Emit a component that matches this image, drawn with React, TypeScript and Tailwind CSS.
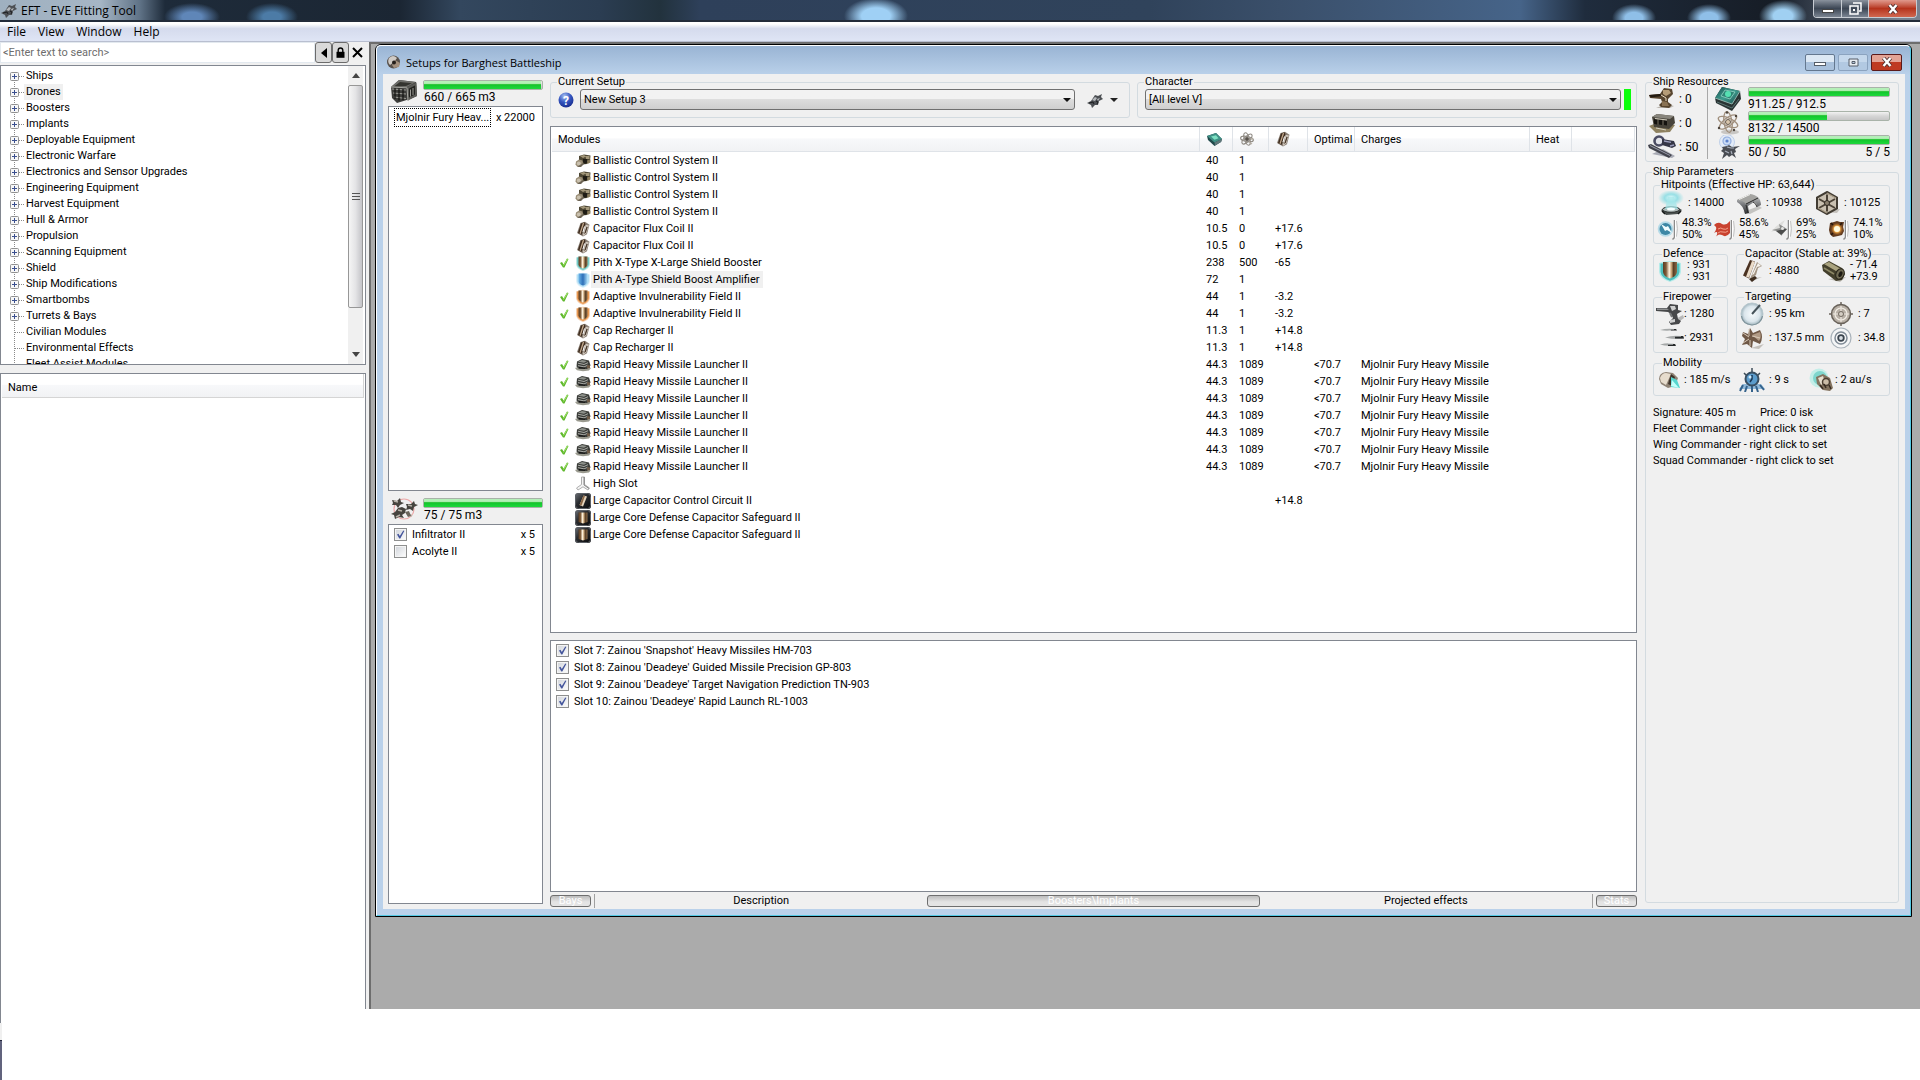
import type { ReactNode } from "react";

type Module = {
  name: string;
  icon: ReactNode;
  active?: boolean;
  selected?: boolean;
  cpu?: string;
  grid?: string;
  cap?: string;
  optimal?: string;
  charges?: string;
};

/* ---------- icons ---------- */

function Icon16({ children }: { children: ReactNode }) {
  return (
    <svg viewBox="0 0 16 16" className="h-4 w-4 shrink-0" aria-hidden="true">
      {children}
    </svg>
  );
}

function Icon28({ children }: { children: ReactNode }) {
  return (
    <svg viewBox="0 0 28 24" className="h-6 w-7 shrink-0" aria-hidden="true">
      {children}
    </svg>
  );
}

function Gradients() {
  return (
    <svg className="absolute h-0 w-0" aria-hidden="true">
      <defs>
        <linearGradient id="steel" x1="0" x2="0" y1="0" y2="1">
          <stop offset="0" stopColor="#d9dadb" />
          <stop offset=".5" stopColor="#7b7d80" />
          <stop offset="1" stopColor="#2d2e30" />
        </linearGradient>
        <linearGradient id="plate" x1="0" x2="1">
          <stop offset="0" stopColor="#5a3c22" />
          <stop offset=".22" stopColor="#7d5a38" />
          <stop offset=".45" stopColor="#fff3de" />
          <stop offset=".6" stopColor="#c9a679" />
          <stop offset=".75" stopColor="#5a4027" />
          <stop offset="1" stopColor="#8a6a48" />
        </linearGradient>
        <linearGradient id="blueplate" x1="0" x2="1">
          <stop offset="0" stopColor="#6bb6ea" />
          <stop offset=".5" stopColor="#2d6fb8" />
          <stop offset="1" stopColor="#a8dcf7" />
        </linearGradient>
        <linearGradient id="teal" x1="0" x2="1" y1="0" y2="1">
          <stop offset="0" stopColor="#1c4f50" />
          <stop offset=".5" stopColor="#3d9c8e" />
          <stop offset="1" stopColor="#1d4b4d" />
        </linearGradient>
        <radialGradient id="help" cx=".4" cy=".25" r=".8">
          <stop offset="0" stopColor="#a9c2f2" />
          <stop offset=".5" stopColor="#3556c0" />
          <stop offset="1" stopColor="#16298a" />
        </radialGradient>
        <radialGradient id="cyanGlow">
          <stop offset="0" stopColor="#e9ffff" />
          <stop offset=".5" stopColor="#83dbe2" stopOpacity=".8" />
          <stop offset="1" stopColor="#83dbe2" stopOpacity="0" />
        </radialGradient>
        <radialGradient id="fireGlow">
          <stop offset="0" stopColor="#fffbd8" />
          <stop offset=".45" stopColor="#f7b04c" />
          <stop offset="1" stopColor="#7a3a10" stopOpacity="0" />
        </radialGradient>
        <radialGradient id="dial">
          <stop offset="0" stopColor="#f7fbfd" />
          <stop offset=".7" stopColor="#dbe6ec" />
          <stop offset="1" stopColor="#9fb4bd" />
        </radialGradient>
        <linearGradient id="rig" x1="0" x2="1" y1="0" y2="1">
          <stop offset="0" stopColor="#6f747a" />
          <stop offset=".4" stopColor="#2b2d31" />
          <stop offset="1" stopColor="#08090a" />
        </linearGradient>
      </defs>
    </svg>
  );
}

const ballistic = (
  <Icon16>
    <path d="M4 3l5-1.500 6.500 1-.5 5.500-3 3-5 .5-3-3z" fill="#4d4633" />
    <path d="M5 3l4-1 2 1.500-3 1.500zM10.500 3l4 0 0 3-3.500 0z" fill="#a3977a" />
    <path d="M8 6l4 0 1 3-3 2-2-2z" fill="#1f1c15" />
    <path d="M12 7.500l3.500-1 0 3-3 1.500z" fill="#8a7d5d" />
    <path d="M1 8.500l3-2 3.500 1 .5 3-2.500 3.500-3.500-.5-1.500-2z" fill="#9b8f78" />
    <circle cx="3.800" cy="10.500" r="2" fill="#c9c0ae" />
    <path d="M2 14l4 0 3-3-1-1z" fill="#6b6353" />
  </Icon16>
);

const capacitor = (
  <Icon16>
    <path d="M5.500 2L10 .8l4.500 3-2.500 9.500L8 15.500 2 12z" fill="#8b8076" />
    <path d="M6 2.500l3.500-1.300 1 1.800L6.500 14 3 12z" fill="#3e2c1e" />
    <path d="M7.700 2.200l1.600-.4L5.600 13 4.500 12.500z" fill="#c1a88c" />
    <path d="M10.800 4l3 .5-2.600 8-3.400 2.500z" fill="#ddd5ca" />
    <path d="M11.500 5.500l1.300.4-2 6-1.800 1z" fill="#49392c" />
    <path d="M9.500 5.500L8 11" stroke="#fff" strokeWidth="1" />
  </Icon16>
);

function ShieldIcon({ glow, fill }: { glow: string; fill: string }) {
  return (
    <Icon16>
      <path d="M1 2.500Q8-1 15 2.500V9q-.5 5-7 7Q1.500 14 1 9z" fill={glow} opacity=".45" />
      <path d="M2 2.500h12V9q-.5 4-6 6-5.500-2-6-6z" fill={glow} />
      <path d="M3.500 1.500h9V9.500Q12 12.500 8 13.500 4 12.500 3.500 9.500z" fill={fill} />
    </Icon16>
  );
}

const launcher = (
  <Icon16>
    <path d="M0 11l3-1 9 0 4 1-2 2.500-6 .8-6-1z" fill="#9a9a8f" />
    <path d="M2 4.500L7 2l7 1.500 1.500 5L12 12l-8 0-2.500-2.500z" fill="#3b3d39" />
    <path d="M3 4.800l4-1.800 5 1-3 1.700z" fill="#8e918b" />
    <path d="M3 6.200l6 1.300 4-1.800M3 8.600l6 1.300 4-1.800" stroke="#c5c7c1" strokeWidth=".8" fill="none" />
    <path d="M12 8l3 .5 0 2.500-3 .5z" fill="#6f5b47" />
    <path d="M4 10.500l6 .8" stroke="#111" />
  </Icon16>
);

const highSlot = (
  <Icon16>
    <path d="M6.500 1h3v7.500l5 3.500-1.500 2L8 10.800 3 14l-1.500-2 5-3.500z" fill="#f4f4f4" stroke="#a5a5a5" strokeWidth=".9" />
    <path d="M9 1v8l5 3.500" fill="none" stroke="#6c6c6c" strokeWidth=".8" />
  </Icon16>
);

const rigCircuit = (
  <Icon16>
    <rect width="16" height="16" rx="3" fill="url(#rig)" />
    <rect x=".5" y=".5" width="15" height="15" rx="3" fill="none" stroke="#5d6167" />
    <path d="M8.500 2.500l3.500 1L8 13.500l-3.500-1.500z" fill="#e6d5bd" />
    <path d="M8.500 2.500l1.500.5L6.500 12.500 4.500 12z" fill="#8a6645" />
  </Icon16>
);

const rigSafeguard = (
  <Icon16>
    <rect width="16" height="16" rx="3" fill="url(#rig)" />
    <rect x=".5" y=".5" width="15" height="15" rx="3" fill="none" stroke="#5d6167" />
    <path d="M3.500 2.500h9v9.500L8 13.500 3.500 12z" fill="url(#plate)" />
  </Icon16>
);

const cpuSmall = (
  <Icon16>
    <path d="M1 5l9-3 6 6-1 3-6.500 4L2 9z" fill="#20494b" />
    <path d="M1 5l9-3 6 6-7.500 3.500z" fill="#3f9186" />
    <path d="M5 5.500l5-1.300 2.500 3-4 1.500z" fill="#7de0c2" />
    <path d="M8.500 11.500L16 8l-.7 2.800L9 14.500z" fill="#60777a" />
  </Icon16>
);

const gridSmall = (
  <Icon16>
    <g fill="none" stroke="#8f8a83" strokeWidth="1.100">
      <ellipse cx="8" cy="8" rx="2.600" ry="6.500" transform="rotate(-20 8 8)" />
      <ellipse cx="8" cy="8" rx="2.600" ry="6.500" transform="rotate(45 8 8)" />
      <ellipse cx="8" cy="8" rx="2.600" ry="6.500" transform="rotate(100 8 8)" />
    </g>
    <circle cx="8" cy="8" r="2" fill="#57514a" />
    <path d="M10 11l3 2M12 8l2 0" stroke="#b9b2a8" strokeWidth="1.500" />
  </Icon16>
);

const shipSmall = (
  <Icon16>
    <path d="M0 11l4-2 4-6 3 1 4-2-1 3 2 2-4 2-1 4-3 0-3 3-1-3z" fill="#4d5054" />
    <path d="M5 8l3-3 2 1-2 3zM10 7l3-1-2 3z" fill="#b5b8bc" />
    <path d="M2 11l4-1 1 2M9 9l2 1-1 2" stroke="#1b1d20" fill="none" />
  </Icon16>
);

const cargoIcon = (
  <Icon28>
    <path d="M1 8L9 1l17 2 1 14-7 3L7 24 2 19z" fill="#3d3d3b" />
    <path d="M1 8L9 1l17 2-9 5z" fill="#6f6f6b" />
    <path d="M4 7.500L10 3l12 1.200-6 2.800z" fill="#34342f" />
    <path d="M17 8l9.500-4.500L27 17l-9 4.500z" fill="#5a5a56" />
    <path d="M19 9.500l6-3v9l-6 3z" fill="#22221f" />
    <path d="M20.500 10.500v7M23 9v7M2 10l14 1M3 14l13 1M4 18l12 1.500" stroke="#9b9b95" strokeWidth="1" />
    <path d="M5 9v11M9 9.500v12M13 10v11" stroke="#121210" strokeWidth="1.200" />
    <path d="M1 8l16 .8L18 22" stroke="#a6a6a0" fill="none" />
  </Icon28>
);

const dronesIcon = (
  <Icon28>
    <circle cx="14" cy="12" r="10" fill="none" stroke="#eba9a9" strokeWidth="1.200" />
    <g fill="#46443f">
      <path d="M2 3l5 1 3-3 1 4 3 1-4 2-2 3-2-3-4 0 1-2z" />
      <path d="M16 7l5 0 3-3 1 3 3 1-4 2-1 4-3-2-4 1 1-3z" />
      <path d="M8 11l4-1 4 2-1 4-3 2 2 3-5-1-4 2-1-4-3-1 4-2z" />
    </g>
    <path d="M4 4l4 1M18 8l4 1M8 13l4 1M6 20l4-2M17 16l5 3" stroke="#b7b2a8" strokeWidth="1.500" />
    <path d="M15 15l4-1 2 5-3 1z" fill="#6a655c" />
  </Icon28>
);

const turretIcon = (
  <Icon28>
    <path d="M8 21l14 0 4-2-8-2z" fill="#b9b4ad" />
    <path d="M1 8l11-1 4-6 8 1 1 5-5 5 0 3 4 3-3 3-8-1-2-2 3-3-1-3L2 11z" fill="#57452f" />
    <path d="M1 8l11-1 2 2-11 1.500z" fill="#231a10" />
    <path d="M15 3l6 0 2 3-5 3-3-2z" fill="#b59c77" />
    <path d="M14 14l5 1 2 4-7 0z" fill="#897254" />
    <path d="M13 8l5 3 0 3" stroke="#eadcc2" fill="none" />
  </Icon28>
);

const launcherIcon = (
  <Icon28>
    <path d="M1 15l10-4 16 3-5 7-14 1z" fill="#8e815f" />
    <path d="M4 6l5-3 17 2 1 7-6 6-15-2z" fill="#47433a" />
    <path d="M4 6l5-3 17 2-4 3z" fill="#88857c" />
    <path d="M6 8l3 .4v5l-3-.6zM11 8.600l3 .4v5l-3-.6zM16 9.200l3 .4v5l-3-.6z" fill="#15130f" />
    <path d="M7 7.500l12 1.500M8 17l10 2" stroke="#d4cfc0" strokeWidth="1" />
  </Icon28>
);

const calibrationIcon = (
  <Icon28>
    <path d="M4 19l20 4 3-2-12-7z" fill="#a8aab4" />
    <path d="M0 10l3-1 21 11-3 3L1 13z" fill="#42434c" />
    <path d="M2 10.500l20 10" stroke="#989aa9" strokeWidth="1" />
    <circle cx="11" cy="6" r="4.500" fill="#e2e3ea" stroke="#4b4c63" strokeWidth="2.600" />
    <path d="M14 4l12 2 2 5-4 2-10-3z" fill="#353646" />
    <path d="M16 6l7 1.300M22 11l4-1" stroke="#9b9dbb" strokeWidth="1.300" />
  </Icon28>
);

const cpuIcon = (
  <Icon28>
    <path d="M1 11L8 0l18 4 1 8-9 12L2 16z" fill="#2a3434" />
    <path d="M1 11L8 0l18 4-8 13z" fill="url(#teal)" />
    <path d="M7 9l4-6 10 2-5 7z" fill="#2f8475" stroke="#92d6c5" strokeWidth=".8" />
    <circle cx="14" cy="7" r="3" fill="#5cf0bd" opacity=".85" />
    <path d="M1 11l17 6 8-13" fill="none" stroke="#8fb2ab" />
    <path d="M3 15l15 6 7-9" stroke="#5a7573" fill="none" />
  </Icon28>
);

const gridIcon = (
  <Icon28>
    <ellipse cx="16" cy="21" rx="9" ry="2.500" fill="#c8c6c3" />
    <g fill="none" stroke="#a08f7d" strokeWidth="1.300">
      <ellipse cx="14" cy="11" rx="4" ry="10.500" transform="rotate(-8 14 11)" />
      <ellipse cx="14" cy="11" rx="4" ry="10.500" transform="rotate(52 14 11)" />
      <ellipse cx="14" cy="11" rx="4" ry="10.500" transform="rotate(-66 14 11)" />
    </g>
    <circle cx="14" cy="11" r="2.500" fill="#d8c6ad" stroke="#65584a" />
    <g fill="#4c443c">
      <circle cx="13" cy="1.500" r="1.200" />
      <circle cx="5" cy="17" r="1.200" />
      <circle cx="22" cy="5" r="1.200" />
      <circle cx="20" cy="19" r="1.200" />
    </g>
  </Icon28>
);

const bandwidthIcon = (
  <Icon28>
    <circle cx="13" cy="7" r="7.500" fill="#e3ebf7" stroke="#c0d1ea" />
    <circle cx="13" cy="6" r="4" fill="#cbdcf5" stroke="#8fabde" strokeWidth="1.200" />
    <circle cx="13" cy="6" r="1.600" fill="#5d82cc" />
    <path d="M8 12l5-1 2-1 3 2 8-1-5 3 1 3-2 1 2 5-4-3-3 2-2-2-5 4 2-6-3-2 2-2z" fill="#494c53" />
    <path d="M13 12l4 1 3 0M11 16l4 2M17 16l1 3" stroke="#a9afba" strokeWidth="1.200" fill="none" />
  </Icon28>
);

const shieldHpIcon = (
  <Icon28>
    <ellipse cx="14" cy="7" rx="13" ry="8" fill="url(#cyanGlow)" />
    <path d="M4 19l6-3h10l5 3-4 4-12 1z" fill="#4b5150" />
    <ellipse cx="14" cy="18.500" rx="8.500" ry="2.800" fill="#aeb9b8" stroke="#2b302f" />
    <path d="M8 18L11 6l6 0 4 12z" fill="#a7e7ea" opacity=".75" />
    <ellipse cx="14" cy="18" rx="4" ry="1.500" fill="#f4ffff" />
    <path d="M5 20l3 3M24 20l-3 3" stroke="#151817" strokeWidth="1.500" />
  </Icon28>
);

const armorIcon = (
  <Icon28>
    <path d="M8 21l7 2 12-6-3-2z" fill="#c3c3c1" />
    <path d="M2 9L15 3q8 1 10 6 1 3 1 5l-4 2q0-4-3-5l-6 4 1 7-4 1Q8 14 2 11z" fill="url(#steel)" />
    <path d="M2 9L15 3q5 .5 8 4L11 13Q8 9 2 9z" fill="#a5a5a2" />
    <path d="M11 13l12-6M18 11q3 1 4 5M11 14l2 8" stroke="#2a2a2a" fill="none" />
    <path d="M4 8.500l11-5" stroke="#f1f1ee" />
  </Icon28>
);

const hullIcon = (
  <Icon28>
    <path d="M8 21l16 1 3-4z" fill="#c6c3be" />
    <path d="M14 1l10 5.500v11L14 23 4 17.500v-11z" fill="#c9c0b1" stroke="#423c33" strokeWidth="2" />
    <path d="M14 3.500v17M6 8l16 9M22 8L6 17" stroke="#4b4237" strokeWidth="2" />
    <path d="M14 2l9 5M5 17l9 5" stroke="#a89b85" strokeWidth="1.200" />
    <circle cx="14" cy="12" r="2.500" fill="#8c8170" stroke="#2f2922" />
  </Icon28>
);

/* resistance plate drawn to the right of every damage icon */
function DamageIcon({ children }: { children: ReactNode }) {
  return (
    <svg viewBox="0 0 25 24" className="h-6 w-[25px] shrink-0" aria-hidden="true">
      {children}
      <path d="M17.500 3v17.500l-2 2" fill="none" stroke="#8b8b8b" strokeWidth="1.500" />
      <path d="M19.500 4q2 8 0 15l-2 2.500" fill="none" stroke="#c4c4c4" />
      <path d="M18.500 3v18" stroke="#fff" />
    </svg>
  );
}

const emIcon = (
  <DamageIcon>
    <circle cx="8.500" cy="12" r="7.800" fill="#b6dbe8" />
    <circle cx="8.500" cy="12" r="6" fill="#3d87a5" />
    <path d="M4 7l5 3 2-1 4 7-5-3-2 1z" fill="#f2fdff" />
  </DamageIcon>
);

const thermalIcon = (
  <DamageIcon>
    <path d="M0 8q4-4 8-1 4 2 8-3l0 12q-4 5-8 2-4-2-7 3 3-4 2-6-2 0-3 1 3-4 2-6-1-1-2-2z" fill="#c9422f" />
    <path d="M4 12q3-2 5 0 3 1 5-1M4 16q2-2 5-1 3 1 5-1" stroke="#f3a08b" strokeWidth="1" fill="none" />
  </DamageIcon>
);

const kineticIcon = (
  <DamageIcon>
    <path d="M0 15Q5 8 14 3L9 12z" fill="#dededc" />
    <path d="M1 13l8-2-1-4 8 5-6 7 0-4z" fill="#8e8f8e" />
    <path d="M5 14l8-2 3 0-6 6z" fill="#4c4d4c" />
    <circle cx="11.500" cy="11.500" r="1.500" fill="#e6e6e4" />
  </DamageIcon>
);

const explosiveIcon = (
  <DamageIcon>
    <path d="M2 6l4-1 3-1 3 1 4 0-1 5 1 4-2 4-4 1-5 1-3-3-1-4z" fill="#5f3a1f" />
    <circle cx="9" cy="12" r="7" fill="url(#fireGlow)" />
    <circle cx="9" cy="12" r="3" fill="#fffbe0" />
    <path d="M3 6l2 2M14 6l-2 2M3 18l2-2" stroke="#25160b" strokeWidth="1.500" />
  </DamageIcon>
);

const defenceIcon = (
  <Icon28>
    <path d="M3 4q11-4 22 0v9q-1 7-11 10Q4 20 3 13z" fill="#b5ebe9" />
    <path d="M4.500 4.500h19V13q-1 6-9.500 8.800Q5.500 19 4.500 13z" fill="#4dbfbd" />
    <path d="M7 3h14v10q-.5 4.500-7 6.500-6.500-2-7-6.500z" fill="url(#plate)" />
  </Icon28>
);

const capacitorIcon = (
  <Icon28>
    <path d="M12 23l12-5-6 1z" fill="#b9b7b4" />
    <path d="M12 1l5 1.500-6 17-6-3z" fill="#4a3120" />
    <path d="M14 2l3 .7-6 16-3-1z" fill="#eadbc8" />
    <path d="M19 3l5 4-4 2-2 7-6 4 5-12z" fill="#a39584" />
    <path d="M20 4l3 3-4 1-3 7-2 1z" fill="#f7f3ec" />
    <path d="M11 20l6-3 2 2-5 4z" fill="#3d2c1e" />
  </Icon28>
);

const rechargeIcon = (
  <Icon28>
    <path d="M9 20l12 3 6-5z" fill="#bebcb6" />
    <path d="M3 6l7-4 13 7 3 6-3 6-6 1L4 12z" fill="#433f2b" />
    <path d="M5 5l5-2 12 7-5 2z" fill="#aaa37f" />
    <ellipse cx="21" cy="15" rx="4" ry="5.500" transform="rotate(25 21 15)" fill="#6f6a52" stroke="#28251a" />
    <ellipse cx="21.500" cy="15" rx="1.800" ry="3" transform="rotate(25 21 15)" fill="#1d1a12" />
    <path d="M5 9l10 6" stroke="#8c8765" strokeWidth="1.500" />
  </Icon28>
);

const dpsIcon = (
  <Icon28>
    <path d="M14 20l13-7 1 3-8 6z" fill="#b8b8b8" />
    <path d="M0 6l11 0 3-4 8 1 0 5 4 1-5 3 1 5 3 2-2 3-8 1-2-3 4-4-2-4-3-2L0 9z" fill="#47484a" />
    <path d="M1 6.500h10l2 1.500H1z" fill="#8e9091" />
    <path d="M14 4l5 0 1 3-4 2zM14 18l5-1 0 3-5 1z" fill="#cfd0d0" />
    <path d="M14 11l2 4" stroke="#747677" strokeWidth="2" />
  </Icon28>
);

const volleyIcon = (
  <Icon28>
    <path d="M4 4Q12 2 21 3.500 12 5.500 4 4zM9 11.500Q18 8.500 28 10.500v2Q20 14 9 11.500zM4 18.500Q13 16 20 18.500 13 21 4 18.500z" fill="#a5a8a8" />
    <path d="M14 3h6l1 1.500h-6zM19 10h8l1 2.500h-9zM12 18h7l1 2h-8z" fill="#26292a" />
    <path d="M14 3h4M19 10h6M12 18h5" stroke="#e7eaea" />
  </Icon28>
);

const rangeIcon = (
  <Icon28>
    <circle cx="14" cy="12" r="11" fill="url(#dial)" stroke="#b8c8ce" />
    <path d="M3.500 14q1 8 10.500 9 9-1 10.500-9" fill="none" stroke="#7e929a" strokeWidth="1.200" />
    <path d="M14 12L22 3" stroke="#46535a" strokeWidth="2" />
  </Icon28>
);

const scanIcon = (
  <Icon28>
    <path d="M13 22l13-4-5 5z" fill="#c3bfba" />
    <path d="M5 6l5 2 2-6 3 5 7-3q4 7 0 14l-7-3-1 7-5-4-5 1 3-6-3-3z" fill="#6f5846" />
    <path d="M14 9l8-3q2 5-1 9z" fill="#b19a85" />
    <path d="M11 3l0 7M5 7l6 4M5 17l6-4M12 14l0 6M14 10l8 2" stroke="#d9cab9" strokeWidth="1" />
  </Icon28>
);

const targetsIcon = (
  <Icon28>
    <path d="M14 0v24M2 12h24" stroke="#6e675f" strokeWidth="1.500" />
    <circle cx="14" cy="12" r="9.500" fill="#b8b0a6" stroke="#69625a" strokeWidth="1.500" />
    <circle cx="14" cy="12" r="6" fill="none" stroke="#f1ece4" strokeWidth="1.200" />
    <path d="M14 4v16M6 12h16" stroke="#eee8df" strokeWidth="1.200" />
    <circle cx="14" cy="12" r="2.500" fill="#d5cec4" stroke="#6f675e" />
  </Icon28>
);

const sensorIcon = (
  <Icon28>
    <circle cx="14" cy="12" r="10" fill="#f5f6f7" stroke="#a9b2ba" strokeWidth="1.200" />
    <circle cx="14" cy="12" r="6" fill="none" stroke="#7f8a95" strokeWidth="1.500" />
    <circle cx="14" cy="12" r="2.800" fill="#d8dee3" stroke="#39434d" strokeWidth="1.800" />
  </Icon28>
);

const speedIcon = (
  <Icon28>
    <path d="M3 11q0-6 7-7l7 1 5 5-3 8-7 2-7-4z" fill="#8f8375" />
    <path d="M4 10q2-5 6-5l5 1-5 11-5-3z" fill="#e6dccd" />
    <path d="M12 16l3-10 4 3-3 9z" fill="#3f342b" />
    <path d="M15 9l6 3 3 8-9-1z" fill="#56d6cf" />
    <path d="M16 12l7 8-8-2z" fill="#c2fffb" />
  </Icon28>
);

const alignIcon = (
  <Icon28>
    <path d="M5 16h18l4 5H1z" fill="#8fb8d8" />
    <path d="M5 17l-3 6M9 18l-2 6M14 18v6M18 18l2 6M22 17l4 5" stroke="#35638c" strokeWidth="2" />
    <path d="M14 0v4M6 5l3 3M22 5l-3 3" stroke="#3c4c58" strokeWidth="1.500" />
    <circle cx="14" cy="11" r="6.500" fill="#5b9ccc" stroke="#384e61" strokeWidth="2" />
    <path d="M14 7v4l-2 3" stroke="#173453" strokeWidth="1.500" fill="none" />
    <circle cx="12" cy="9" r="1.500" fill="#d5ecfa" />
  </Icon28>
);

const warpIcon = (
  <Icon28>
    <circle cx="12" cy="10" r="9.500" fill="#c4eee8" />
    <circle cx="13" cy="10" r="7" fill="#7fd6cd" />
    <path d="M9 9l7-3 7 4 3 10-3 3-7-1-6-6z" fill="#83735f" />
    <path d="M11 10l5-2 2 6-4 3z" fill="#e6dece" />
    <circle cx="19" cy="14" r="3.500" fill="#cabca7" stroke="#4b3f32" strokeWidth="1.500" />
    <path d="M17 16l2 4M22 17l2 4M13 17l3 4" stroke="#372c22" strokeWidth="1.500" />
  </Icon28>
);

/* ---------- data ---------- */

const categories = [
  "Ships",
  "Drones",
  "Boosters",
  "Implants",
  "Deployable Equipment",
  "Electronic Warfare",
  "Electronics and Sensor Upgrades",
  "Engineering Equipment",
  "Harvest Equipment",
  "Hull & Armor",
  "Propulsion",
  "Scanning Equipment",
  "Shield",
  "Ship Modifications",
  "Smartbombs",
  "Turrets & Bays",
];

const leafCategories = ["Civilian Modules", "Environmental Effects", "Fleet Assist Modules"];

const bcs: Module = { name: "Ballistic Control System II", icon: ballistic, cpu: "40", grid: "1" };
const flux: Module = { name: "Capacitor Flux Coil II", icon: capacitor, cpu: "10.5", grid: "0", cap: "+17.6" };
const invuln: Module = {
  name: "Adaptive Invulnerability Field II",
  icon: <ShieldIcon glow="#e8974f" fill="url(#plate)" />,
  active: true,
  cpu: "44",
  grid: "1",
  cap: "-3.2",
};
const recharger: Module = { name: "Cap Recharger II", icon: capacitor, cpu: "11.3", grid: "1", cap: "+14.8" };
const rhml: Module = {
  name: "Rapid Heavy Missile Launcher II",
  icon: launcher,
  active: true,
  cpu: "44.3",
  grid: "1089",
  optimal: "<70.7",
  charges: "Mjolnir Fury Heavy Missile",
};
const safeguard: Module = { name: "Large Core Defense Capacitor Safeguard II", icon: rigSafeguard };

const modules: Module[] = [
  bcs,
  bcs,
  bcs,
  bcs,
  flux,
  flux,
  {
    name: "Pith X-Type X-Large Shield Booster",
    icon: <ShieldIcon glow="#6fc9c4" fill="url(#plate)" />,
    active: true,
    cpu: "238",
    grid: "500",
    cap: "-65",
  },
  {
    name: "Pith A-Type Shield Boost Amplifier",
    icon: <ShieldIcon glow="#b5e0f5" fill="url(#blueplate)" />,
    selected: true,
    cpu: "72",
    grid: "1",
  },
  invuln,
  invuln,
  recharger,
  recharger,
  rhml,
  rhml,
  rhml,
  rhml,
  rhml,
  rhml,
  rhml,
  { name: "High Slot", icon: highSlot },
  { name: "Large Capacitor Control Circuit II", icon: rigCircuit, cap: "+14.8" },
  safeguard,
  safeguard,
];

const implants = [
  "Slot 7: Zainou 'Snapshot' Heavy Missiles HM-703",
  "Slot 8: Zainou 'Deadeye' Guided Missile Precision GP-803",
  "Slot 9: Zainou 'Deadeye' Target Navigation Prediction TN-903",
  "Slot 10: Zainou 'Deadeye' Rapid Launch RL-1003",
];

const drones = [
  { name: "Infiltrator II", count: "x 5", checked: true },
  { name: "Acolyte II", count: "x 5", checked: false },
];

const resists = [
  { icon: emIcon, shield: "48.3%", armor: "50%" },
  { icon: thermalIcon, shield: "58.6%", armor: "45%" },
  { icon: kineticIcon, shield: "69%", armor: "25%" },
  { icon: explosiveIcon, shield: "74.1%", armor: "10%" },
];

/* ---------- shared controls ---------- */

function Group({ label, className = "", children }: { label: string; className?: string; children: ReactNode }) {
  return (
    <fieldset className={`min-w-0 rounded-[3px] border border-[#d3dbe0] ${className}`}>
      <legend className="ml-[6px] px-px leading-[10px]">{label}</legend>
      {children}
    </fieldset>
  );
}

function Bar({ value }: { value: number }) {
  return (
    <div className="h-[10px] rounded-[2px] border border-[#a9b3a9] bg-linear-to-b from-[#f2f2f2] via-[#d6d6d6] to-[#c6c6c6]">
      <div
        className="h-full bg-linear-to-b from-[#b4f0b8] from-30% via-[#12c42c] via-45% to-[#1ed83c]"
        style={{ width: `${value}%` }}
      />
    </div>
  );
}

function Check({ label, checked }: { label: string; checked: boolean }) {
  return (
    <label className="flex h-[17px] items-center gap-[5px]">
      <span className="relative flex h-[13px] w-[13px]">
        <input
          type="checkbox"
          defaultChecked={checked}
          className="peer h-[13px] w-[13px] appearance-none border border-[#8e8f8f] bg-linear-to-br from-[#cfd3d9] to-white outline-1 -outline-offset-2 outline-[#f4f4f4]"
        />
        <svg viewBox="0 0 13 13" className="pointer-events-none absolute inset-0 hidden peer-checked:block" aria-hidden="true">
          <path d="M3 6.500l1.500-.7L5.800 8 9.300 2.500l1 .5-4 7.500h-1z" fill="#44559c" />
        </svg>
      </span>
      {label}
    </label>
  );
}

function Stat({ icon, gap = "gap-[3px]", children }: { icon: ReactNode; gap?: string; children: ReactNode }) {
  return (
    <div className={`flex h-6 items-center whitespace-nowrap ${gap}`}>
      {icon}
      <div className="leading-3">{children}</div>
    </div>
  );
}

function Combo({ label, options }: { label: string; options: string[] }) {
  return (
    <div className="relative flex-1">
      <select
        aria-label={label}
        className="block h-[21px] w-full appearance-none rounded-[3px] border border-[#707070] bg-linear-to-b from-[#f2f2f2] from-45% via-[#dddddd] via-50% to-[#cfcfcf] pl-[3px] text-[11px] text-black"
      >
        {options.map((option) => (
          <option key={option}>{option}</option>
        ))}
      </select>
      <svg viewBox="0 0 8 4" className="pointer-events-none absolute top-[9px] right-[4px] h-1 w-2" aria-hidden="true">
        <path d="M0 0h8L4 4z" fill="#111" />
      </svg>
    </div>
  );
}

function CloseMark() {
  return (
    <svg viewBox="0 0 12 10" className="h-[10px] w-3" aria-hidden="true">
      <path d="M2.500 1l7 8M9.500 1l-7 8" stroke="#4f3030" strokeWidth="4" />
      <path d="M2.500 1l7 8M9.500 1l-7 8" stroke="#fff" strokeWidth="2.400" />
    </svg>
  );
}

/* ---------- panels ---------- */

function TitleBar() {
  return (
    <header className="flex h-[22px] shrink-0 items-start justify-between border-b-2 border-[#232c3a] bg-[radial-gradient(ellipse_28px_14px_at_192px_17px,#5f86b8_35%,transparent),radial-gradient(ellipse_26px_14px_at_272px_17px,#4c7ba6_35%,transparent),radial-gradient(ellipse_32px_18px_at_876px_16px,#9fd0f5_45%,transparent),radial-gradient(ellipse_22px_14px_at_1634px_18px,#8fbfe8_40%,transparent),radial-gradient(ellipse_22px_14px_at_1709px_18px,#8fbfe8_40%,transparent),radial-gradient(ellipse_24px_16px_at_1783px_16px,#a0d0f2_40%,transparent),linear-gradient(90deg,#9fb0c0_0px,#a6b6c5_100px,#5f7286_140px,#1e2b3a_165px,#1b2633_400px,#33475e_460px,#2b3d52_600px,#22323d_660px,#2e405a_700px,#30435b_1150px,#3a4f6a_1280px,#466489_1520px,#1f2c3d_1585px,#161c25_1780px,#2a3340_1800px,#77818f_1900px)]">
      <div className="flex h-5 items-center gap-[4px] pl-px">
        {shipSmall}
        <h1 className="font-['Open_Sans',sans-serif] text-[12px] text-black">EFT - EVE Fitting Tool</h1>
      </div>
      <div className="mr-[3px] flex h-[18px] overflow-hidden rounded-b-[4px] border border-t-0 border-[#c7ccd3]">
        <button aria-label="Minimize" className="flex w-7 items-center justify-center border-r border-[#c7ccd3] bg-linear-to-b from-[#8a929d] via-[#3c4654] to-[#7b8592]">
          <span className="mt-1 h-1 w-3 border border-[#444] bg-white" />
        </button>
        <button aria-label="Restore" className="flex w-[27px] items-center justify-center border-r border-[#c7ccd3] bg-linear-to-b from-[#8a929d] via-[#3c4654] to-[#7b8592]">
          <svg viewBox="0 0 13 13" className="h-[13px] w-[13px]" aria-hidden="true">
            <path d="M4 1h8v8h-2M1 4h8v8H1z" fill="none" stroke="#fff" strokeWidth="1.500" />
            <path d="M4 7h2v2H4z" fill="#fff" />
          </svg>
        </button>
        <button aria-label="Close" className="flex w-[47px] items-center justify-center bg-linear-to-b from-[#e0998d] via-[#b5331c] to-[#d1674f]">
          <CloseMark />
        </button>
      </div>
    </header>
  );
}

function MenuBar() {
  return (
    <nav className="flex h-5 shrink-0 items-center gap-[12px] border-b border-[#b9bfd0] bg-linear-to-b from-white from-10% via-[#d5dbed] via-35% to-[#dfe5f5] pl-[7px] font-['Open_Sans',sans-serif] text-[12px]">
      {["File", "View", "Window", "Help"].map((item) => (
        <button key={item}>{item}</button>
      ))}
    </nav>
  );
}

function Browser() {
  return (
    <aside className="flex w-[366px] shrink-0 flex-col">
      <div className="flex h-[23px] items-start">
        <input
          aria-label="Search"
          placeholder="<Enter text to search>"
          className="h-[21px] min-w-0 flex-1 border border-[#e3e9ef] bg-white px-[2px] placeholder:text-[#6d6d6d]"
        />
        <button aria-label="Collapse" className="flex h-[21px] w-[17px] items-center justify-center rounded-[3px] border border-[#6b6b6b] bg-[#d9d9d9]">
          <svg viewBox="0 0 6 10" className="h-[10px] w-[6px]" aria-hidden="true">
            <path d="M6 0v10L0 5z" />
          </svg>
        </button>
        <button aria-label="Lock" className="flex h-[21px] w-[17px] items-center justify-center rounded-[3px] border border-[#6b6b6b] bg-[#d9d9d9]">
          <svg viewBox="0 0 9 11" className="h-[11px] w-[9px]" aria-hidden="true">
            <path d="M2.200 5V3.300a2.300 2.300 0 014.600 0V5" fill="none" stroke="#000" strokeWidth="1.400" />
            <rect x=".5" y="4.800" width="8" height="6" />
          </svg>
        </button>
        <button aria-label="Close panel" className="flex h-[21px] w-[17px] items-center justify-center">
          <svg viewBox="0 0 11 11" className="h-[11px] w-[11px]" aria-hidden="true">
            <path d="M1 1l9 9M10 1l-9 9" stroke="#000" strokeWidth="2" />
          </svg>
        </button>
      </div>

      <div className="flex h-[300px] shrink-0 border border-[#828790] bg-white">
        <ul className="min-w-0 flex-1 overflow-hidden pt-[2px] pl-[9px]">
          {categories.map((name, i) => (
            <li key={name} className="flex h-4 items-center">
              <svg viewBox="0 0 14 16" className="h-4 w-[14px]" aria-hidden="true">
                <path d={i === 0 ? "M4.500 8v8" : "M4.500 0v16"} stroke="#8a8a8a" strokeDasharray="1 1" />
                <path d="M9 8.500h5" stroke="#8a8a8a" strokeDasharray="1 1" />
                <rect x=".5" y="4.500" width="8" height="8" rx="1" fill="#f7f7f7" stroke="#919191" />
                <path d="M2 8.500h5M4.500 6v5" stroke="#3a4f8f" />
              </svg>
              <span className={name === "Drones" ? "bg-[#f0f0f0] px-[2px] leading-4" : "px-[2px] leading-4"}>{name}</span>
            </li>
          ))}
          {leafCategories.map((name) => (
            <li key={name} className="flex h-4 items-center">
              <svg viewBox="0 0 14 16" className="h-4 w-[14px]" aria-hidden="true">
                <path d="M4.500 0v16M5 8.500h9" stroke="#8a8a8a" strokeDasharray="1 1" />
              </svg>
              <span className="px-[2px] leading-4">{name}</span>
            </li>
          ))}
        </ul>
        <div className="mr-[2px] flex w-[15px] flex-col items-center bg-[#f0f0f0]">
          <button aria-label="Scroll up" className="flex h-[19px] items-center">
            <svg viewBox="0 0 8 5" className="h-[5px] w-2" aria-hidden="true">
              <path d="M0 5h8L4 0z" fill="#444" />
            </svg>
          </button>
          <div className="flex h-[223px] w-full flex-col items-center justify-center gap-[2px] rounded-[2px] border border-[#979797] bg-linear-to-r from-[#f5f5f5] via-[#e4e4e6] to-[#c4c4c8]">
            <span className="h-px w-2 bg-[#555]" />
            <span className="h-px w-2 bg-[#555]" />
            <span className="h-px w-2 bg-[#555]" />
          </div>
          <button aria-label="Scroll down" className="mt-auto flex h-[19px] items-center">
            <svg viewBox="0 0 8 5" className="h-[5px] w-2" aria-hidden="true">
              <path d="M0 0h8L4 5z" fill="#444" />
            </svg>
          </button>
        </div>
      </div>

      <div className="mt-2 flex-1 border border-b-0 border-[#828790] bg-white px-px">
        <div className="h-6 border-r border-b border-[#d5d5d5] bg-linear-to-b from-white from-45% via-[#f7f8fa] via-50% to-[#f1f2f4] pl-[6px] leading-[27px]">Name</div>
      </div>
    </aside>
  );
}

function Bays() {
  return (
    <section className="flex w-[155px] shrink-0 flex-col">
      <div className="flex h-8 shrink-0 gap-[5px] pt-[5px] pl-[2px]">
        {cargoIcon}
        <div className="flex-1 pt-px">
          <Bar value={99} />
          <p className="pl-px text-[12px] leading-[14px]">660 / 665 m3</p>
        </div>
      </div>
      <div className="mb-px flex h-[385px] shrink-0 items-start justify-between border border-[#828790] bg-white py-px pr-[7px] pl-[5px]">
        <span className="border border-dotted border-black px-px leading-[17px]">Mjolnir Fury Heav...</span>
        <span className="leading-[19px]">x 22000</span>
      </div>
      <div className="flex h-8 shrink-0 gap-[5px] pt-[5px] pl-[2px]">
        {dronesIcon}
        <div className="flex-1 pt-px">
          <Bar value={100} />
          <p className="pl-px text-[12px] leading-[14px]">75 / 75 m3</p>
        </div>
      </div>
      <ul className="flex-1 border border-[#828790] bg-white pt-px pr-[7px] pl-[5px]">
        {drones.map((drone) => (
          <li key={drone.name} className="flex items-center justify-between">
            <Check label={drone.name} checked={drone.checked} />
            <span>{drone.count}</span>
          </li>
        ))}
      </ul>
    </section>
  );
}

const headCell =
  "h-[25px] border-r border-b border-[#dfe3e8] bg-linear-to-b from-white from-45% via-[#f7f8fa] via-50% to-[#f1f2f4] p-0 pl-[6px] text-left font-normal";

function ModuleTable() {
  return (
    <div className="flex-1 overflow-hidden border border-[#828790] bg-white px-px">
      <table className="w-full table-fixed border-separate border-spacing-0">
        <colgroup>
          <col />
          <col className="w-[33px]" />
          <col className="w-[36px]" />
          <col className="w-[39px]" />
          <col className="w-[47px]" />
          <col className="w-[175px]" />
          <col className="w-[42px]" />
          <col className="w-[63px]" />
        </colgroup>
        <thead>
          <tr>
            <th className={headCell}>Modules</th>
            <th className={headCell} aria-label="CPU">
              {cpuSmall}
            </th>
            <th className={headCell} aria-label="Powergrid">
              {gridSmall}
            </th>
            <th className={headCell} aria-label="Capacitor">
              {capacitor}
            </th>
            <th className={headCell}>Optimal</th>
            <th className={headCell}>Charges</th>
            <th className={headCell}>Heat</th>
            <th className={headCell} aria-label="Notes" />
          </tr>
        </thead>
        <tbody>
          {modules.map((m, i) => (
            <tr key={i} className="h-[17px] leading-[17px] whitespace-nowrap *:p-0 *:pl-[6px]">
              <td>
                <div className="flex h-[17px] items-center">
                  <span className="w-[17px] pl-px">
                    {m.active && (
                      <svg viewBox="0 0 10 10" className="h-[10px] w-[10px]" aria-label="Active">
                        <path d="M1 5l2-1 1.500 2.500L8 .5 9.500 1 5.500 9.500H4z" fill="#5fb82c" />
                        <path d="M4.500 7.500L8.500 1" stroke="#a5e36f" strokeWidth="1" />
                      </svg>
                    )}
                  </span>
                  {m.icon}
                  <span className={m.selected ? "bg-[#f0f0f0] pr-[4px] pl-[2px]" : "pl-[2px]"}>{m.name}</span>
                </div>
              </td>
              <td>{m.cpu}</td>
              <td>{m.grid}</td>
              <td>{m.cap}</td>
              <td>{m.optimal}</td>
              <td>{m.charges}</td>
              <td />
              <td />
            </tr>
          ))}
        </tbody>
      </table>
    </div>
  );
}

const pressed =
  "flex h-3 items-center justify-center rounded-[3px] border border-[#6f6f6f] bg-linear-to-b from-[#bdbdbd] to-[#e4e4e4] to-60% text-white";

function Fitting() {
  return (
    <section className="flex min-w-0 flex-1 flex-col pt-[3px]">
      <div className="grid grid-cols-[580fr_500fr] gap-[7px]">
        <Group label="Current Setup" className="pb-[7px]">
          <div className="flex items-center gap-[6px] pt-[2px] pl-[7px]">
            <svg viewBox="0 0 16 16" className="h-4 w-4" role="img" aria-label="Help">
              <circle cx="8" cy="8" r="7.500" fill="url(#help)" />
              <text x="8" y="12.500" textAnchor="middle" fontSize="12" fontWeight="700" fill="#fff">
                ?
              </text>
            </svg>
            <Combo label="Current setup" options={["New Setup 3"]} />
            <button aria-label="Ship menu" className="flex w-[48px] items-center gap-[7px] pl-[6px]">
              {shipSmall}
              <svg viewBox="0 0 8 4" className="h-1 w-2" aria-hidden="true">
                <path d="M0 0h8L4 4z" fill="#222" />
              </svg>
            </button>
          </div>
        </Group>
        <Group label="Character" className="pb-[7px]">
          <div className="flex items-center gap-[3px] pt-[2px] pr-[5px] pl-[7px]">
            <Combo label="Character" options={["[All level V]"]} />
            <span className="h-[21px] w-[7px] bg-[#0bff0b]" />
          </div>
        </Group>
      </div>
      <div className="mt-2 flex min-h-0 flex-1">
        <ModuleTable />
      </div>
      <ul className="mt-[7px] h-[252px] shrink-0 border border-[#828790] bg-white pt-px pl-[5px]">
        {implants.map((name) => (
          <li key={name}>
            <Check label={name} checked />
          </li>
        ))}
      </ul>
      <div className="flex h-[17px] shrink-0 items-center gap-[3px]">
        <button className={`w-[41px] ${pressed}`}>Bays</button>
        <div className="grid h-[14px] flex-1 grid-cols-3 items-center border-x border-[#a0a0a0]">
          <button>Description</button>
          <button className={pressed}>Boosters\Implants</button>
          <button>Projected effects</button>
        </div>
        <button className={`w-[41px] ${pressed}`}>Stats</button>
      </div>
    </section>
  );
}

function ShipStats() {
  return (
    <section className="flex w-[254px] shrink-0 flex-col gap-[5px] pt-[3px] pb-[6px]">
      <Group label="Ship Resources" className="pb-[2px]">
        <div className="flex text-[12px]">
          <div className="w-[62px] border-r border-[#a8a8a8] pl-[2px]">
            <Stat icon={turretIcon}>: 0</Stat>
            <Stat icon={launcherIcon}>: 0</Stat>
            <Stat icon={calibrationIcon}>: 50</Stat>
          </div>
          <div className="w-[40px] pl-[6px]">
            {cpuIcon}
            {gridIcon}
            {bandwidthIcon}
          </div>
          <div className="flex-1 pr-[8px] leading-[14px]">
            <Bar value={100} />
            <p>911.25 / 912.5</p>
            <Bar value={56} />
            <p>8132 / 14500</p>
            <Bar value={100} />
            <p className="flex justify-between">
              <span>50 / 50</span>
              <span>5 / 5</span>
            </p>
          </div>
        </div>
      </Group>

      <Group label="Ship Parameters" className="flex-1">
        <div className="flex flex-col gap-[5px] pt-[3px] pr-[8px] pl-[7px]">
          <Group label="Hitpoints (Effective HP: 63,644)" className="pb-[2px]">
            <div className="grid grid-cols-[78px_78px_1fr] pt-px pl-[3px]">
              <Stat icon={shieldHpIcon}>: 14000</Stat>
              <Stat icon={armorIcon}>: 10938</Stat>
              <Stat icon={hullIcon}>: 10125</Stat>
            </div>
            <div className="grid grid-cols-[57px_57px_57px_1fr] pt-[2px] pl-[3px]">
              {resists.map((r) => (
                <Stat key={r.shield} icon={r.icon} gap="gap-0">
                  {r.shield}
                  <br />
                  {r.armor}
                </Stat>
              ))}
            </div>
          </Group>

          <div className="grid grid-cols-[75px_1fr] gap-x-2 gap-y-[5px]">
            <Group label="Defence" className="pb-[3px] pl-[2px]">
              <Stat icon={defenceIcon}>
                : 931
                <br />: 931
              </Stat>
            </Group>
            <Group label="Capacitor (Stable at: 39%)" className="pb-[3px] pl-px">
              <div className="grid grid-cols-[81px_1fr]">
                <Stat icon={capacitorIcon}>: 4880</Stat>
                <Stat icon={rechargeIcon}>
                  - 71.4
                  <br />
                  +73.9
                </Stat>
              </div>
            </Group>
            <Group label="Firepower" className="pb-[2px] pl-[2px]">
              <Stat icon={dpsIcon} gap="gap-0">
                : 1280
              </Stat>
              <Stat icon={volleyIcon} gap="gap-0">
                : 2931
              </Stat>
            </Group>
            <Group label="Targeting" className="pb-[2px] pl-px">
              <div className="grid grid-cols-[89px_1fr]">
                <Stat icon={rangeIcon}>: 95 km</Stat>
                <Stat icon={targetsIcon}>: 7</Stat>
                <Stat icon={scanIcon}>: 137.5 mm</Stat>
                <Stat icon={sensorIcon}>: 34.8</Stat>
              </div>
            </Group>
          </div>

          <Group label="Mobility" className="pb-[3px] pl-[2px]">
            <div className="grid grid-cols-[82px_69px_1fr]">
              <Stat icon={speedIcon} gap="gap-0">
                : 185 m/s
              </Stat>
              <Stat icon={alignIcon}>: 9 s</Stat>
              <Stat icon={warpIcon} gap="gap-0">
                : 2 au/s
              </Stat>
            </div>
          </Group>
        </div>
        <div className="pt-[9px] pl-[7px] leading-4">
          <p className="flex gap-[24px]">
            <span>Signature: 405 m</span>
            <span>Price: 0 isk</span>
          </p>
          <p>Fleet Commander - right click to set</p>
          <p>Wing Commander - right click to set</p>
          <p>Squad Commander - right click to set</p>
        </div>
      </Group>
    </section>
  );
}

function SetupWindow() {
  return (
    <article className="mr-[8px] mb-[92px] ml-[4px] flex min-w-0 flex-1 flex-col rounded-t-[6px] border border-black bg-[#bad1ea] bg-linear-to-b from-[#98b3d3] to-[#bad1ea] to-[30px]">
      <div className="flex min-h-0 flex-1 flex-col rounded-t-[5px] border border-t-white border-r-[#54c9e4] border-b-[#54c9e4] border-l-white pr-[5px] pb-[6px] pl-[6px]">
        <div className="flex h-7 shrink-0 items-center justify-between pt-[4px] pl-[3px]">
          <div className="flex items-center gap-[4px]">
            <svg viewBox="0 0 16 16" className="h-4 w-4" aria-hidden="true">
              <circle cx="7.500" cy="8" r="6.500" fill="#57504b" />
              <path d="M3 4q4-4 8 0l-3 4-4 3q-3-3-1-7z" fill="#cfcac5" />
              <path d="M9 6l5 3-1 4-5 1-2-3z" fill="#a3907e" />
              <circle cx="8" cy="8.500" r="2" fill="#241e1a" />
            </svg>
            <h2 className="font-['Open_Sans',sans-serif] text-[11px]">Setups for Barghest Battleship</h2>
          </div>
          <div className="flex gap-[3px] pr-[3px]">
            <button aria-label="Minimize setup" className="flex h-[17px] w-[30px] items-center justify-center rounded-[2px] border border-[#64788f] bg-linear-to-b from-[#dce8f4] from-45% to-[#a9c1dc] to-50%">
              <span className="mt-1 h-1 w-3 border border-[#555d68] bg-white" />
            </button>
            <button aria-label="Maximize setup" className="flex h-[17px] w-[30px] items-center justify-center rounded-[2px] border border-[#8ba3bf] bg-linear-to-b from-[#c5d8ec] from-45% to-[#b2c9e2] to-50%">
              <svg viewBox="0 0 11 9" className="h-[9px] w-[11px]" aria-hidden="true">
                <path d="M1 1h9v7H1z" fill="#e9edf2" stroke="#555d68" />
                <path d="M4 3.500h3v2H4z" fill="#b9cbe0" stroke="#555d68" />
              </svg>
            </button>
            <button aria-label="Close setup" className="flex h-[17px] w-[31px] items-center justify-center rounded-[2px] border border-[#5b1a1a] bg-linear-to-b from-[#e3a395] from-45% to-[#bf3a22] to-50%">
              <CloseMark />
            </button>
          </div>
        </div>
        <div className="flex min-h-0 flex-1 bg-[#f0f0f0] pr-[6px] pl-[5px]">
          <div className="mr-[7px] flex pb-[5px]">
            <Bays />
          </div>
          <Fitting />
          <div className="ml-2 flex">
            <ShipStats />
          </div>
        </div>
      </div>
    </article>
  );
}

export default function App() {
  return (
    <div className="flex h-screen min-h-[1000px] flex-col bg-white font-['Roboto',sans-serif] text-[11px] leading-[13px] text-black">
      <Gradients />
      <TitleBar />
      <MenuBar />
      <main className="flex min-h-0 flex-1 bg-[#f0f0f0]">
        <Browser />
        <div className="ml-[3px] flex min-w-0 flex-1 border-t-2 border-l-2 border-[#6d6d6d] bg-[#ababab]">
          <SetupWindow />
        </div>
      </main>
      <footer className="flex h-[71px] shrink-0 flex-col">
        <div className="h-[14px] w-[2px] border-l border-[#828790]" />
        <div className="h-[17px] w-[2px] bg-[#f0f0f0]" />
        <div className="w-[2px] flex-1 border-t border-[#22243a] bg-[#61637d]" />
      </footer>
    </div>
  );
}
